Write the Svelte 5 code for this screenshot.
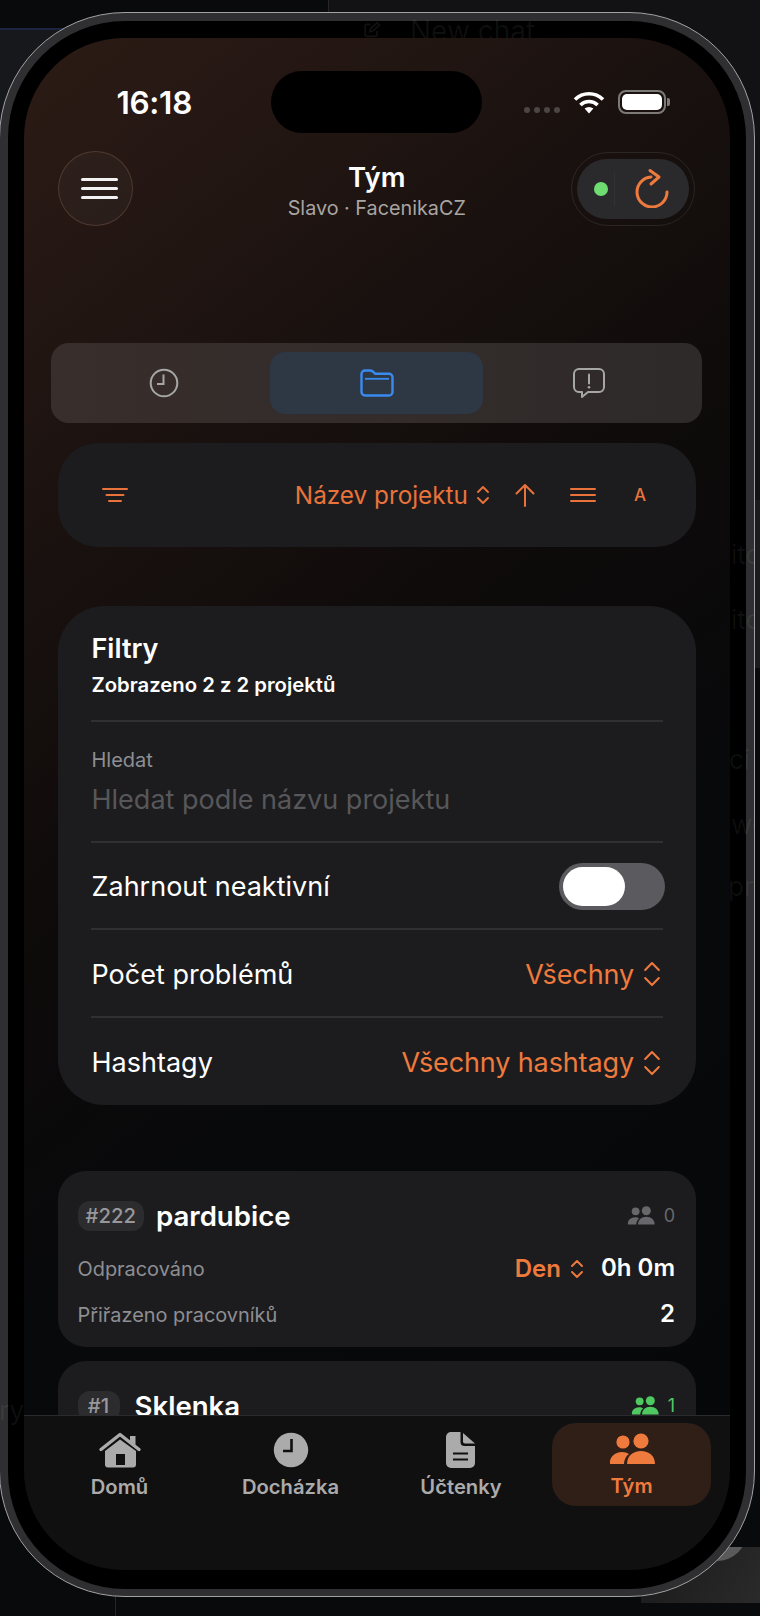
<script>
  const filterRows = [
    { label: 'Počet problémů', value: 'Všechny' },
    { label: 'Hashtagy', value: 'Všechny hashtagy' }
  ];
  const tabs = [
    { label: 'Domů', icon: 'home' },
    { label: 'Docházka', icon: 'clock' },
    { label: 'Účtenky', icon: 'doc' },
    { label: 'Tým', icon: 'team', active: true }
  ];
</script>

{#snippet updown(cls)}
  <svg class={cls} viewBox="0 0 14 22" fill="none" stroke="currentColor" stroke-width="1.9" stroke-linecap="round" stroke-linejoin="round">
    <path d="M2 8 7 3l5 5M2 14l5 5 5-5" />
  </svg>
{/snippet}

{#snippet people(cls)}
  <svg class={cls} viewBox="0 0 46 32" fill="currentColor">
    <circle cx="14" cy="9" r="6.6" />
    <circle cx="32" cy="8" r="7.6" />
    <path d="M1 31c-1-7 5-12 12-12 3 0 5 .7 7 2-3 2-5 6-5 10z" />
    <path d="M18 31c0-8 6-13 14-13s14 5 14 13z" />
  </svg>
{/snippet}

<div class="page">
  <div class="bg-corner"></div>
  <div class="bg-right"></div>
  <div class="bg-panel"></div>
  <div class="bg-block"><div class="bg-arc"></div></div>
  <div class="bg-line top"></div>
  <div class="bg-line bottom"></div>

  <div class="device">
    <div class="bezel">
      <div class="screen">
        <div class="island"></div>

        <div class="statusbar">
          <span class="time">16:18</span>
          <div class="status-right">
            <div class="cell"><i></i><i></i><i></i><i></i></div>
            <svg class="wifi" viewBox="0 0 32 24" fill="none" stroke="#fff" stroke-width="3.6">
              <path d="M2 9.5a20 20 0 0 1 28 0M7.4 15a12.4 12.4 0 0 1 17.2 0" />
              <path d="M11.6 18.6a6.5 6.5 0 0 1 8.8 0L16 23.5z" fill="#fff" stroke="none" />
            </svg>
            <div class="battery"><div class="battery-fill"></div></div>
            <div class="battery-tip"></div>
          </div>
        </div>

        <header class="header">
          <button class="menu" aria-label="Menu"><i></i><i></i><i></i></button>
          <div class="title">
            <div class="title-main">Tým</div>
            <div class="title-sub">Slavo · FacenikaCZ</div>
          </div>
          <div class="sync">
            <div class="sync-inner">
              <span class="dot"></span>
              <span class="sync-div"></span>
              <svg class="refresh" viewBox="0 0 40 40" fill="none" stroke="#ee7a3d" stroke-width="3" stroke-linecap="round" stroke-linejoin="round">
                <path d="M19 9A15 15 0 1 0 35 24" />
                <path d="M18 2.5 27 9l-8 7" />
              </svg>
            </div>
          </div>
        </header>

        <div class="segment">
          <div class="seg-item">
            <svg class="seg-clock" width="30" height="30" viewBox="0 0 30 30" fill="none" stroke="#a6a6a6" stroke-width="2">
              <circle cx="15" cy="15" r="13.3" />
              <path d="M14.5 6.5V16H8" />
            </svg>
          </div>
          <div class="seg-item selected">
            <svg class="seg-folder" width="34" height="28" viewBox="0 0 34 28" fill="none" stroke="#3a8bf0" stroke-width="2.4" stroke-linejoin="round">
              <path d="M1.5 5A3.5 3.5 0 0 1 5 1.5h5c2 0 3 .8 4 2l1 1.2h14a3.5 3.5 0 0 1 3.5 3.5V23a3.5 3.5 0 0 1-3.5 3.500H5A3.500 3.500 0 0 1 1.500 23z" />
              <path d="M5 9.8h24" stroke-width="1.8" />
            </svg>
          </div>
          <div class="seg-item">
            <svg class="seg-bubble" width="32" height="30" viewBox="0 0 32 30" fill="none" stroke="#a6a6a6" stroke-width="2" stroke-linejoin="round">
              <path d="M6 1h20a5 5 0 0 1 5 5v13a5 5 0 0 1-5 5H15l-6 5v-5H6a5 5 0 0 1-5-5V6a5 5 0 0 1 5-5z" />
              <path d="M16 6.5v9" stroke-linecap="round" />
              <circle cx="16" cy="19.3" r="1.3" fill="#a6a6a6" stroke="none" />
            </svg>
          </div>
        </div>

        <div class="sortbar">
          <svg class="filter-ico" viewBox="0 0 26 16" fill="none" stroke="currentColor" stroke-width="2" stroke-linecap="round">
            <path d="M1 2h24M4.5 8h17M7 14h12" />
          </svg>
          <div class="sort-right">
            <span class="sort-name">Název projektu</span>
            {@render updown('chev sort-chev')}
            <svg class="arrow" viewBox="0 0 20 24" fill="none" stroke="currentColor" stroke-width="2" stroke-linecap="round" stroke-linejoin="round">
              <path d="M10 23V2M1.5 10.5 10 2l8.500 8.500" />
            </svg>
            <svg class="lines" viewBox="0 0 26 16" fill="none" stroke="currentColor" stroke-width="2" stroke-linecap="round">
              <path d="M1 2h24M1 8h24M1 14h24" />
            </svg>
            <span class="sort-a">A</span>
          </div>
        </div>

        <section class="filters">
          <div class="filters-head">
            <div class="filters-title">Filtry</div>
            <div class="filters-count">Zobrazeno 2 z 2 projektů</div>
          </div>
          <div class="search">
            <div class="search-label">Hledat</div>
            <div class="search-ph">Hledat podle názvu projektu</div>
          </div>
          <div class="row">
            <span>Zahrnout neaktivní</span>
            <div class="toggle"><div class="knob"></div></div>
          </div>
          {#each filterRows as r}
            <div class="row">
              <span>{r.label}</span>
              <span class="row-val">{r.value}{@render updown('chev row-chev')}</span>
            </div>
          {/each}
        </section>

        <div class="projects">
          <article class="project">
            <div class="proj-head">
              <span class="badge">#222</span>
              <span class="proj-name">pardubice</span>
              <span class="proj-people">{@render people('people-ico')}<span>0</span></span>
            </div>
            <div class="proj-row first">
              <span class="proj-label">Odpracováno</span>
              <span class="proj-right">
                <span class="den">Den</span>
                {@render updown('chev den-chev')}
                <span class="proj-val">0h 0m</span>
              </span>
            </div>
            <div class="proj-row">
              <span class="proj-label">Přiřazeno pracovníků</span>
              <span class="proj-val">2</span>
            </div>
          </article>
          <article class="project">
            <div class="proj-head">
              <span class="badge">#1</span>
              <span class="proj-name short">Sklenka</span>
              <span class="proj-people green">{@render people('people-ico')}<span>1</span></span>
            </div>
          </article>
        </div>

        <nav class="tabbar">
          {#each tabs as t}
            <div class="tab" class:active={t.active}>
              {#if t.icon === 'home'}
                <svg class="tab-ico" width="44" height="36" viewBox="0 0 44 36" fill="#ababab">
                  <path d="M32 4h5.5v9L32 9z" />
                  <path d="M3 17.5 22 2.5l19 15" fill="none" stroke="#ababab" stroke-width="3.4" stroke-linecap="round" stroke-linejoin="round" />
                  <path fill-rule="evenodd" d="M7 19 22 7.5 38 19v13.5a3 3 0 0 1-3 3H10a3 3 0 0 1-3-3zM18 22v11h9V22z" />
                </svg>
              {:else if t.icon === 'clock'}
                <svg class="tab-ico" width="36" height="36" viewBox="0 0 36 36">
                  <circle cx="18" cy="18" r="17.2" fill="#ababab" />
                  <path d="M18.5 7v12H10" fill="none" stroke="#101011" stroke-width="2.6" />
                </svg>
              {:else if t.icon === 'doc'}
                <svg class="tab-ico" width="30" height="36" viewBox="0 0 30 36" fill="#ababab">
                  <path d="M5 0h9.5v10a4 4 0 0 0 4 4H29v17a5 5 0 0 1-5 5H5a5 5 0 0 1-5-5V5a5 5 0 0 1 5-5z" />
                  <path d="M17 1 29 11.5H19a2 2 0 0 1-2-2z" />
                  <path d="M7 21.5h15M7 27.5h15" stroke="#101011" stroke-width="2" />
                </svg>
              {:else}
                {@render people('tab-team')}
              {/if}
              <span class="tab-label">{t.label}</span>
            </div>
          {/each}
        </nav>
      </div>
    </div>
  </div>

  <svg class="ghost-pen" viewBox="0 0 20 20" fill="none" stroke="rgba(255,255,255,0.07)" stroke-width="2">
    <path d="M9 3H4a2 2 0 0 0-2 2v11a2 2 0 0 0 2 2h11a2 2 0 0 0 2-2v-5M8 12l1-4 8-7 3 3-8 7z" />
  </svg>
  <div class="ghost-top"><span>New chat</span></div>
  <div class="ghost-right">
    <span style="top:19px">itc</span>
    <span style="top:84px">itc</span>
    <span style="top:224px; left:0">ci</span>
    <span style="top:289px">we</span>
    <span style="top:351px; left:-1px">pro</span>
  </div>
  <div class="ghost-left"><span>ry</span></div>
</div>

<style>
  :global(body) {
    margin: 0;
    background: #0a0a0c;
  }
  * {
    box-sizing: border-box;
  }
  .page {
    position: relative;
    width: 760px;
    height: 1616px;
    overflow: hidden;
    background: #090a0c;
    font-family: Inter, "Liberation Sans", sans-serif;
    color: #fff;
    padding: 12px 0 0 0;
  }
  .bg-corner {
    position: absolute;
    left: 0;
    top: 28px;
    width: 70px;
    height: 140px;
    background: #17181b;
    border-top: 2px solid #1c2440;
  }
  .bg-right {
    position: absolute;
    left: 328px;
    top: 0;
    width: 432px;
    height: 500px;
    background: #121214;
  }
  .bg-panel {
    position: absolute;
    left: 740px;
    top: 500px;
    width: 20px;
    height: 168px;
    background: #1b1b1d;
  }
  .bg-block {
    position: absolute;
    left: 641px;
    top: 1547px;
    width: 119px;
    height: 56px;
    background: linear-gradient(120deg, #1a1a1b, #2a2a2b);
    overflow: hidden;
  }
  .bg-arc {
    position: absolute;
    left: 46px;
    top: -46px;
    width: 60px;
    height: 60px;
    border-radius: 50%;
    background: #5a5a5a;
  }
  .bg-line {
    position: absolute;
    background: #26262a;
  }
  .bg-line.top {
    left: 328px;
    top: 0;
    width: 1px;
    height: 12px;
  }
  .bg-line.bottom {
    left: 115px;
    top: 1590px;
    width: 1px;
    height: 26px;
  }

  .device {
    position: relative;
    width: 755.5px;
    height: 1585px;
    margin-left: -1px;
    border: 1.5px solid #a2a2a4;
    border-radius: 126px;
    background: #2f2f31;
    padding: 7.5px;
  }
  .bezel {
    height: 100%;
    background: #000;
    border-radius: 117px;
    padding: 17px 16px;
  }
  .screen {
    position: relative;
    height: 1532px;
    border-radius: 100px;
    overflow: hidden;
    background: linear-gradient(142deg, #2c1b15 0%, #241713 12%, #17100e 29%, #0d0a0a 45%, #08090b 62%, #060709 100%);
  }
  .island {
    position: absolute;
    left: 247px;
    top: 33px;
    width: 211px;
    height: 62px;
    border-radius: 31px;
    background: #000;
  }

  .statusbar {
    position: relative;
    height: 114px;
  }
  .time {
    position: absolute;
    left: 93px;
    top: 47px;
    font-size: 31.5px;
    line-height: 36px;
    font-weight: 600;
    letter-spacing: -0.3px;
  }
  .status-right {
    position: absolute;
    left: 500px;
    top: 52px;
    display: flex;
    align-items: flex-start;
  }
  .cell {
    display: flex;
    gap: 4.3px;
    margin-top: 17px;
  }
  .cell i {
    width: 6px;
    height: 6px;
    border-radius: 50%;
    background: #4b4644;
  }
  .wifi {
    width: 32px;
    height: 24px;
    margin-left: 13px;
  }
  .battery {
    width: 48px;
    height: 24px;
    margin-left: 13px;
    border: 2px solid #7d7977;
    border-radius: 8px;
    padding: 2px;
  }
  .battery-fill {
    height: 100%;
    background: #fff;
    border-radius: 5px;
  }
  .battery-tip {
    width: 3px;
    height: 8px;
    margin: 8px 0 0 1px;
    background: #7d7977;
    border-radius: 0 2px 2px 0;
  }

  .header {
    height: 74px;
    padding: 0 34px;
    display: flex;
    align-items: center;
    justify-content: space-between;
    position: relative;
  }
  .menu {
    width: 75px;
    height: 75px;
    border-radius: 50%;
    border: 1px solid rgba(255, 190, 150, 0.17);
    background: rgba(255, 255, 255, 0.03);
    display: flex;
    flex-direction: column;
    align-items: center;
    justify-content: center;
    gap: 6.5px;
    padding: 0 0 0 9px;
  }
  .menu i {
    width: 37px;
    height: 2.5px;
    background: #f2f2f2;
    border-radius: 2px;
  }
  .title {
    position: absolute;
    left: 0;
    right: 0;
    top: 8px;
    text-align: center;
  }
  .title-main {
    font-size: 27.5px;
    line-height: 34px;
    font-weight: 600;
  }
  .title-sub {
    font-size: 19.8px;
    line-height: 24px;
    margin-top: 2px;
    color: #a9a5a3;
  }
  .sync {
    width: 124px;
    height: 74px;
    margin-right: 1px;
    border-radius: 37px;
    border: 1px solid rgba(255, 255, 255, 0.09);
    padding: 6px 5px;
  }
  .sync-inner {
    position: relative;
    height: 100%;
    border-radius: 30px;
    background: #2a2a2c;
    display: flex;
    align-items: center;
  }
  .dot {
    width: 14px;
    height: 14px;
    border-radius: 50%;
    background: #6edc70;
    margin-left: 17px;
  }
  .sync-div {
    width: 1px;
    height: 34px;
    background: #323234;
    margin-left: 6px;
  }
  .refresh {
    width: 40px;
    height: 40px;
    margin: -2px 0 0 17px;
  }

  .segment {
    margin: 117px 28px 0 27px;
    height: 80px;
    padding: 9px;
    border-radius: 18px;
    background: linear-gradient(90deg, #382e2b, #2e2a2a);
    display: grid;
    grid-template-columns: 1fr 213px 1fr;
  }
  .seg-item {
    display: flex;
    align-items: center;
    justify-content: center;
    border-radius: 15px;
  }
  .seg-item.selected {
    background: #2e3744;
  }
  .seg-clock {
    margin-right: 2px;
  }
  .seg-folder {
    margin-left: 2px;
  }
  .seg-bubble {
    margin-left: 2px;
  }

  .sortbar {
    margin: 20px 34px 0;
    height: 104px;
    padding: 0 50px 0 44px;
    border-radius: 40px;
    background: #1c1c1e;
    display: flex;
    align-items: center;
    justify-content: space-between;
    color: #e9733a;
  }
  .filter-ico {
    width: 26px;
    height: 16px;
  }
  .sort-right {
    display: flex;
    align-items: center;
  }
  .sort-name {
    font-size: 24.3px;
    line-height: 30px;
  }
  .chev {
    display: block;
    flex: none;
  }
  .sort-chev {
    width: 14px;
    height: 22px;
    margin-left: 8px;
  }
  .arrow {
    width: 20px;
    height: 24px;
    margin-left: 25px;
  }
  .lines {
    width: 26px;
    height: 16px;
    margin-left: 35px;
  }
  .sort-a {
    font-size: 17px;
    font-weight: 500;
    margin-left: 38px;
  }

  .filters {
    margin: 59px 34px 0;
    height: 499px;
    padding: 0 33px;
    border-radius: 46px;
    background: #1c1c1e;
  }
  .filters-head {
    height: 116px;
    padding: 26px 0 0 1px;
    border-bottom: 2px solid #303033;
  }
  .filters-title {
    font-size: 27px;
    line-height: 34px;
    font-weight: 600;
  }
  .filters-count {
    font-size: 20.3px;
    line-height: 24px;
    font-weight: 600;
    margin-top: 7px;
  }
  .search {
    height: 121px;
    padding: 26px 0 0 1px;
    border-bottom: 2px solid #303033;
  }
  .search-label {
    font-size: 20px;
    line-height: 24px;
    color: #8e8e93;
  }
  .search-ph {
    font-size: 27px;
    line-height: 34px;
    color: #57575a;
    margin-top: 11px;
  }
  .row {
    height: 87.5px;
    padding: 3px 0 0 1px;
    display: flex;
    align-items: center;
    justify-content: space-between;
    font-size: 27px;
    border-bottom: 2px solid #303033;
  }
  .row:last-child {
    border-bottom: none;
  }
  .row-val {
    display: flex;
    align-items: center;
    color: #ee7a3d;
    letter-spacing: -0.12px;
  }
  .row-chev {
    width: 20px;
    height: 30px;
    margin: 0 1px 0 8px;
    stroke-width: 1.5;
  }
  .toggle {
    width: 106px;
    height: 47px;
    margin-right: -2px;
    border-radius: 24px;
    background: #5a5a5f;
    padding: 4px;
  }
  .knob {
    width: 62px;
    height: 39px;
    border-radius: 20px;
    background: #fff;
  }

  .projects {
    margin: 66px 34px 0;
    display: flex;
    flex-direction: column;
    gap: 14px;
  }
  .project {
    border-radius: 28px;
    background: #1c1c1e;
    padding: 29px 21px 16px 20px;
    min-height: 176px;
  }
  .proj-head {
    display: flex;
    align-items: center;
    height: 32px;
  }
  .badge {
    height: 30px;
    min-width: 42px;
    padding: 0 8px;
    border-radius: 12px;
    background: #2c2c2e;
    color: #98989c;
    font-size: 20.3px;
    font-weight: 500;
    line-height: 30px;
    text-align: center;
  }
  .proj-name {
    font-size: 27.6px;
    font-weight: 600;
    margin-left: 12px;
  }
  .proj-name.short {
    margin-left: 15px;
  }
  .proj-people {
    margin-left: auto;
    display: flex;
    align-items: center;
    gap: 9px;
    font-size: 18px;
    color: #68686c;
  }
  .proj-people.green {
    color: #4fc862;
  }
  .people-ico {
    width: 28px;
    height: 19px;
  }
  .proj-row {
    display: flex;
    align-items: center;
    justify-content: space-between;
    height: 32px;
    margin-top: 14px;
  }
  .proj-row.first {
    margin-top: 21px;
  }
  .proj-label {
    font-size: 19.9px;
    color: #8e8e93;
  }
  .proj-right {
    display: flex;
    align-items: center;
  }
  .den {
    font-size: 24px;
    font-weight: 600;
    color: #ee7a3d;
  }
  .den-chev {
    width: 14px;
    height: 22px;
    margin-left: 9px;
    color: #ee7a3d;
  }
  .proj-val {
    font-size: 24px;
    font-weight: 600;
    margin: -3px 0 0 17px;
  }
  .proj-row > .proj-val {
    margin-left: 0;
  }

  .tabbar {
    position: absolute;
    left: 0;
    right: 0;
    bottom: 0;
    height: 155px;
    background: #101011;
    border-top: 1px solid #2b2b2d;
    padding: 7px 0 0 10.5px;
    display: grid;
    grid-template-columns: 171px 171px 170px 165px;
    grid-template-rows: 83px;
    justify-content: start;
    color: #ababab;
  }
  .tab {
    display: flex;
    flex-direction: column;
    align-items: center;
    border-radius: 24px;
    padding-top: 9px;
  }
  .tab.active {
    margin-left: 6px;
    background: #2f1f17;
    color: #ee7a3d;
  }
  .tab-ico {
    display: block;
  }
  :global(.tab-team) {
    width: 46px;
    height: 32px;
    margin-top: 1px;
  }
  .tab-label {
    font-size: 20.2px;
    line-height: 24px;
    font-weight: 600;
    margin-top: 7px;
  }
  .tab.active .tab-label {
    margin-top: 9px;
  }

  .ghost-pen {
    position: absolute;
    left: 362px;
    top: 22px;
    width: 19px;
    height: 16px;
    overflow: hidden;
  }
  .ghost-top,
  .ghost-right,
  .ghost-left {
    position: absolute;
    overflow: hidden;
    color: rgba(255, 255, 255, 0.06);
    font-size: 26px;
    line-height: 32px;
    white-space: nowrap;
  }
  .ghost-top {
    left: 405px;
    top: 13px;
    width: 140px;
    height: 25px;
    font-size: 28px;
  }
  .ghost-top span {
    position: absolute;
    left: 5px;
    top: 2px;
  }
  .ghost-right {
    left: 729px;
    top: 520px;
    width: 25px;
    height: 400px;
  }
  .ghost-right span {
    position: absolute;
    left: 2px;
  }
  .ghost-left {
    left: 0;
    top: 1395px;
    width: 24px;
    height: 36px;
  }
  .ghost-left span {
    position: absolute;
    right: 0;
    top: 0;
  }
</style>
